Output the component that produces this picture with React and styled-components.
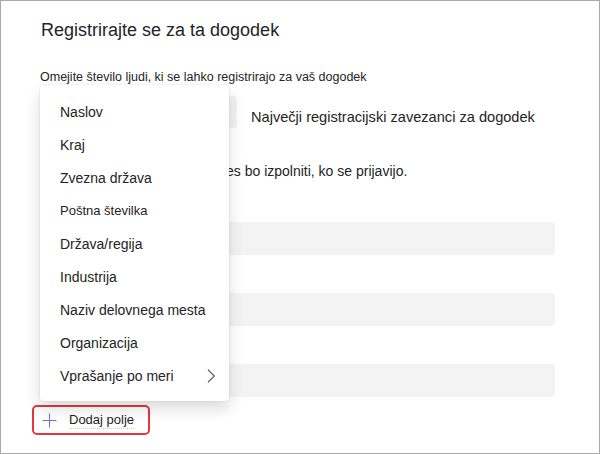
import React from 'react'
import styled, { createGlobalStyle } from 'styled-components'

const GlobalStyle = createGlobalStyle`
    body {
        margin: 0;
        background: #fff;
        font-family: 'Liberation Sans', Arial, sans-serif;
        color: #242424;
    }
`

const Frame = styled.div`
    position: relative;
    width: 600px;
    height: 454px;
    box-sizing: border-box;
    border: 1px solid #a8a8a8;
    overflow: hidden;
    background: #fff;
`

const Content = styled.div`
    padding: 17px 44px 0 39px;
`

const Title = styled.h2`
    margin: 0 0 0 1px;
    font-size: 18px;
    line-height: 24px;
    font-weight: 400;
`

const Subtitle = styled.p`
    margin: 26px 0 0;
    font-size: 12.5px;
    line-height: 18px;
`

const LimitRow = styled.div`
    display: flex;
    align-items: flex-start;
    gap: 14px;
    margin-top: 10px;
`

const Input = styled.div`
    width: ${p => p.width || '100%'};
    height: ${p => p.height || 33}px;
    background: #f3f3f3;
    border-radius: 4px;
    flex-shrink: 0;
`

const LimitLabel = styled.span`
    margin-top: 11px;
    font-size: 14.6px;
    line-height: 20px;
`

const Description = styled.p`
    margin: 33px 0 15px;
    font-size: 14px;
    line-height: 20px;
`

const Fields = styled.div`
    display: flex;
    flex-direction: column;
    gap: 38px;
    padding-top: 26px;
`

const AddButton = styled.button`
    display: inline-flex;
    align-items: center;
    gap: 12px;
    height: 30px;
    margin: 8px 0 0 -8px;
    padding: 0 14px 0 8px;
    box-sizing: border-box;
    border: 2px solid #e5373d;
    border-radius: 5px;
    background: #fff;
    font-family: inherit;
    font-size: 13px;
    color: #242424;
    cursor: pointer;
`

const ButtonText = styled.span`
    border-bottom: 1px dotted #c3cbe8;
    line-height: 17px;
`

const Menu = styled.ul`
    position: absolute;
    left: 39px;
    top: 84px;
    width: 189px;
    margin: 0;
    padding: 10px 0 9px;
    list-style: none;
    background: #fff;
    border-radius: 4px;
    box-shadow: 0 0 2px rgba(0, 0, 0, 0.12), 0 8px 16px rgba(0, 0, 0, 0.14);
`

const MenuItem = styled.li`
    display: flex;
    align-items: center;
    justify-content: space-between;
    height: 33px;
    padding: 0 13px 0 20px;
    font-size: ${p => p.small ? 13 : 14}px;
    color: #242424;
`

const PlusIcon = () => (
    <svg width="15" height="15" viewBox="0 0 15 15" fill="none">
        <path d="M7.5 0.5v14M0.5 7.5h14" stroke="#7074c8" strokeWidth="1.1" />
    </svg>
)

const Chevron = () => (
    <svg width="9" height="14" viewBox="0 0 9 14" fill="none">
        <path d="M1 0.8l6.3 6.2L1 13.2" stroke="#616161" strokeWidth="1.2" />
    </svg>
)

const menuItems = [
    { label: 'Naslov' },
    { label: 'Kraj' },
    { label: 'Zvezna država' },
    { label: 'Poštna številka', small: true },
    { label: 'Država/regija' },
    { label: 'Industrija' },
    { label: 'Naziv delovnega mesta' },
    { label: 'Organizacija' },
    { label: 'Vprašanje po meri', sub: true },
]

function App(){
    return(
        <>
            <GlobalStyle />
            <Frame>
                <Content>
                    <Title>Registrirajte se za ta dogodek</Title>
                    <Subtitle>Omejite število ljudi, ki se lahko registrirajo za vaš dogodek</Subtitle>
                    <LimitRow>
                        <Input width="197px" height={32} />
                        <LimitLabel>Največji registracijski zavezanci za dogodek</LimitLabel>
                    </LimitRow>
                    <Description>Izberite polja, ki jih udeležencies bo izpolniti, ko se prijavijo.</Description>
                    <Fields>
                        <Input />
                        <Input />
                        <Input />
                    </Fields>
                    <AddButton>
                        <PlusIcon />
                        <ButtonText>Dodaj polje</ButtonText>
                    </AddButton>
                </Content>

                <Menu>
                    {menuItems.map(item => (
                        <MenuItem key={item.label} small={item.small}>
                            {item.label}
                            {item.sub && <Chevron />}
                        </MenuItem>
                    ))}
                </Menu>
            </Frame>
        </>
    );
}

export default App
